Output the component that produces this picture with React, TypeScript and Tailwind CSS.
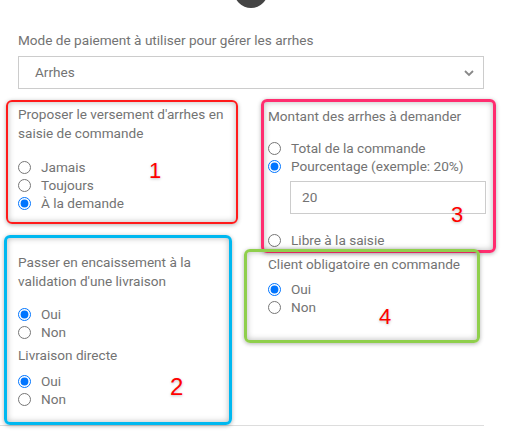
import React from "react";

function Radio({ name, label, checked }: { name: string; label: string; checked?: boolean }) {
  return (
    <label className="flex h-[18px] items-center gap-[10px]">
      <input type="radio" name={name} defaultChecked={checked} className="h-[13px] w-[13px]" />
      <span>{label}</span>
    </label>
  );
}

const box = "pointer-events-none absolute rounded-[6px] shadow-[inset_0_0_6px_rgba(0,0,0,0.28),0_1px_4px_rgba(0,0,0,0.3)]";
const num = "pointer-events-none absolute text-[22px] leading-none text-[#ff0000] [text-shadow:0_1px_3px_rgba(0,0,0,0.25)] font-['Liberation_Sans',Arial,sans-serif]";

export default function App() {
  return (
    <div className="relative h-[446px] w-[505px] overflow-hidden bg-white font-['Roboto',sans-serif] text-[13.6px] leading-[19px] text-[#737373]">
      <div className="absolute left-[234px] top-[-26px] h-[34px] w-[34px] rounded-full bg-[#444]" />
      <div className="w-[484px] border-b border-[#ddd] pb-[17px] pl-[18px] pt-[31px]">
        <div>Mode de paiement à utiliser pour gérer les arrhes</div>
        <div className="mt-[6px] flex h-[33px] items-center justify-between border border-[#ccc] pl-[16px] pr-[8px]">
          <span>Arrhes</span>
          <svg width="12" height="8" viewBox="0 0 12 8" fill="none" stroke="#888" strokeWidth="1.8">
            <path d="M2 2l4 4 4-4" />
          </svg>
        </div>
        <div className="grid grid-cols-[250px_1fr]">
          <div className="pt-[16px]">
            <div>
              Proposer le versement d'arrhes en
              <br />
              saisie de commande
            </div>
            <div className="mt-[15px]">
              <Radio name="a" label="Jamais" />
              <Radio name="a" label="Toujours" />
              <Radio name="a" label="À la demande" checked />
            </div>
            <div className="mt-[41px]">
              Passer en encaissement à la
              <br />
              validation d'une livraison
            </div>
            <div className="mt-[14px]">
              <Radio name="b" label="Oui" checked />
              <Radio name="b" label="Non" />
            </div>
            <div className="mt-[5px]">Livraison directe</div>
            <div className="mt-[7px]">
              <Radio name="c" label="Oui" checked />
              <Radio name="c" label="Non" />
            </div>
          </div>
          <div className="pt-[18px]">
            <div>Montant des arrhes à demander</div>
            <div className="mt-[13px]">
              <Radio name="d" label="Total de la commande" />
              <Radio name="d" label="Pourcentage (exemple: 20%)" checked />
            </div>
            <div className="ml-[22px] mr-[-2px] mt-[6px] flex h-[33px] items-center border border-[#ccc] pl-[11px]">20</div>
            <div className="mt-[17px]">
              <Radio name="d" label="Libre à la saisie" />
            </div>
            <div className="mt-[6px]">Client obligatoire en commande</div>
            <div className="mt-[6px]">
              <Radio name="e" label="Oui" checked />
              <Radio name="e" label="Non" />
            </div>
          </div>
        </div>
      </div>

      <div className={`${box} left-[6px] top-[100px] h-[124px] w-[232px] border-2 border-[#ff1a1a]`} />
      <div className={`${box} left-[261px] top-[99px] h-[154px] w-[235px] border-[3px] border-[#ff2d6f]`} />
      <div className={`${box} left-[4px] top-[235px] h-[190px] w-[228px] border-[3px] border-[#00b8f0]`} />
      <div className={`${box} left-[244px] top-[249px] h-[94px] w-[236px] border-[3px] border-[#8fcf4c]`} />

      <div className={`${num} left-[149px] top-[160px]`}>1</div>
      <div className={`${num} left-[170px] top-[375px] text-[24px]`}>2</div>
      <div className={`${num} left-[451px] top-[204px]`}>3</div>
      <div className={`${num} left-[379px] top-[306px]`}>4</div>
    </div>
  );
}
